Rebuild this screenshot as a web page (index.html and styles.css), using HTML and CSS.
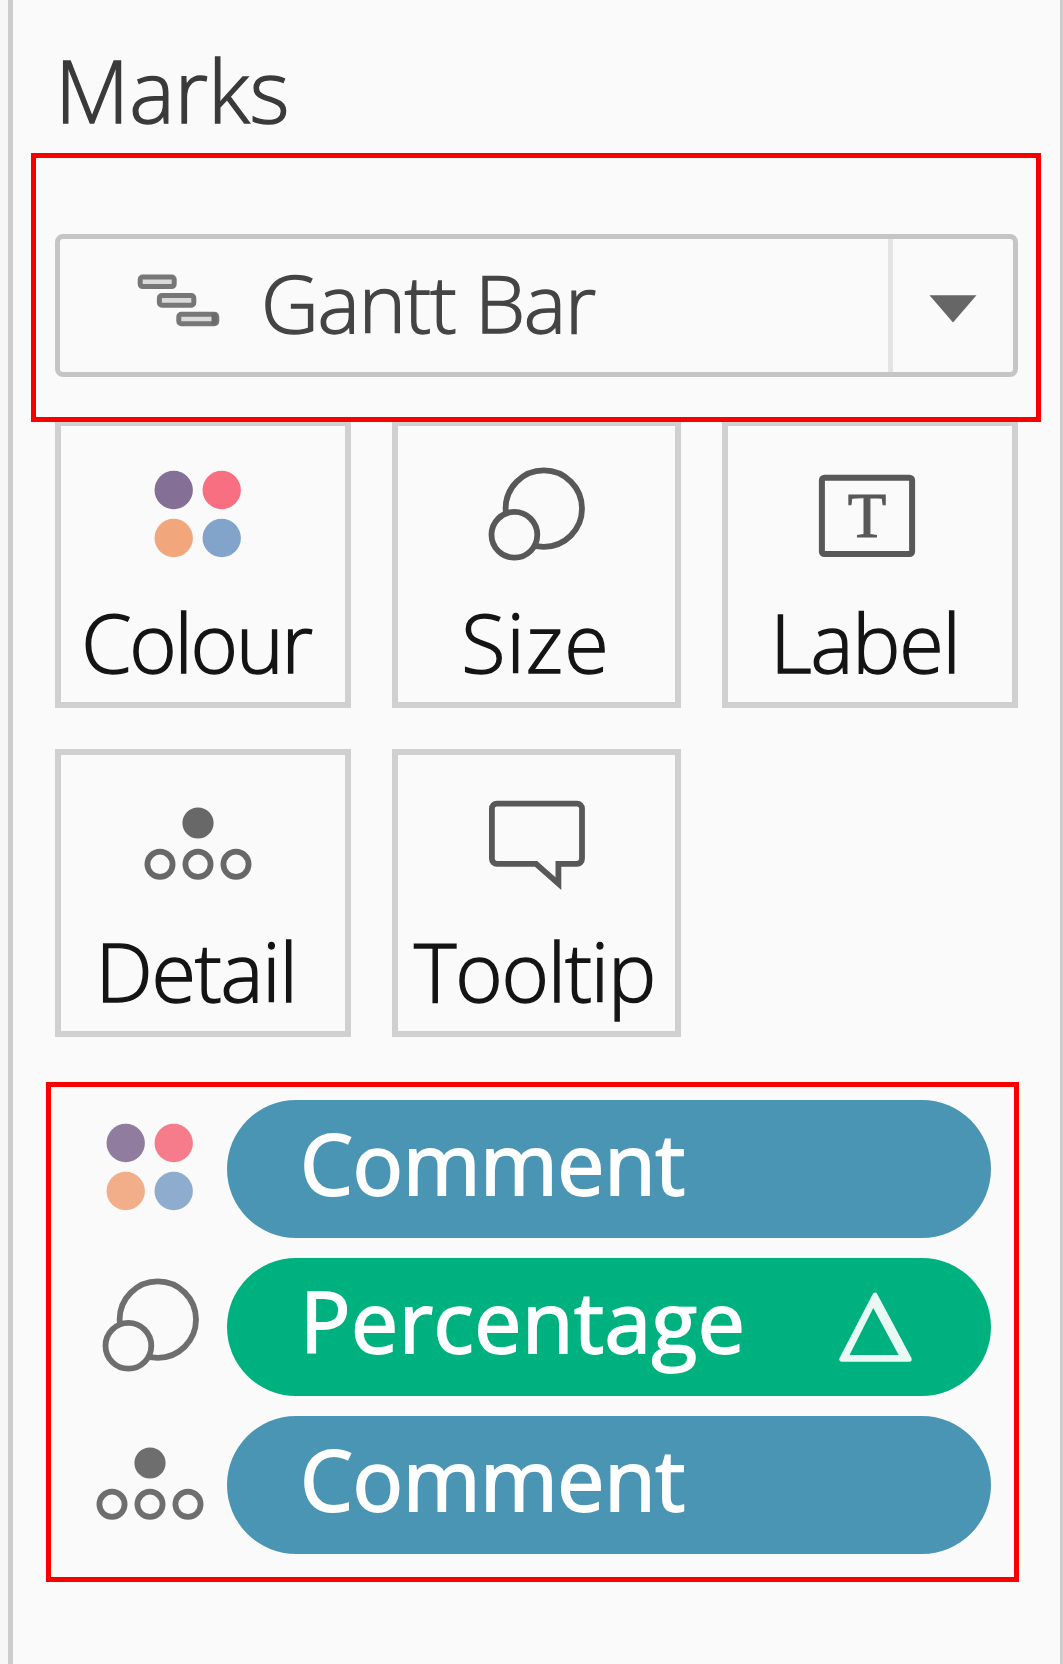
FILE: index.html
```html
<!DOCTYPE html>
<html lang="en-GB">
<head>
<meta charset="utf-8">
<title>Marks</title>
<link rel="stylesheet" href="styles.css">
</head>
<body>
<svg class="symbols" width="0" height="0" aria-hidden="true">
  <symbol id="icon-colour" viewBox="0 0 120 110">
    <circle cx="35.7" cy="30" r="19.2" fill="#846f96"/>
    <circle cx="83.7" cy="30" r="19.2" fill="#f76f80"/>
    <circle cx="35.7" cy="78" r="19.2" fill="#f2a67c"/>
    <circle cx="83.7" cy="78" r="19.2" fill="#82a4ca"/>
  </symbol>
  <symbol id="icon-size" viewBox="0 0 120 110">
    <g fill="#fafafa" stroke="currentColor" stroke-width="5.8">
      <circle cx="66.8" cy="48.6" r="38.2"/>
      <circle cx="37.4" cy="74.8" r="22.9"/>
    </g>
  </symbol>
  <symbol id="icon-detail" viewBox="0 0 120 110">
    <circle cx="60" cy="34" r="15.6" fill="currentColor"/>
    <g fill="none" stroke="currentColor" stroke-width="5.8">
      <circle cx="22" cy="75.3" r="12.6"/>
      <circle cx="60" cy="75.3" r="12.6"/>
      <circle cx="98" cy="75.3" r="12.6"/>
    </g>
  </symbol>
</svg>

<main class="panel">
  <h1 class="title">Marks</h1>

  <section class="highlight highlight-type">
    <div class="select">
      <svg class="gantt" viewBox="0 0 84 54" aria-hidden="true">
        <g fill="#dadada" stroke="#777" stroke-width="5">
          <rect x="3.2" y="3" width="34" height="9.6" rx="2.5"/>
          <rect x="22.4" y="21.6" width="34.4" height="9.6" rx="2.5"/>
          <rect x="41.8" y="40.2" width="38" height="9.6" rx="2.5"/>
        </g>
        <rect x="74.5" y="38.8" width="5.5" height="12" fill="#6a6a6a"/>
      </svg>
      <span class="select-label">Gantt Bar</span>
      <span class="select-arrow">
        <svg width="48" height="28" viewBox="0 0 48 28" aria-hidden="true"><path d="M.5 .3H47.5L24 27.6Z" fill="#666"/></svg>
      </span>
    </div>
  </section>

  <section class="tiles">
    <div class="tile shift-l">
      <svg class="icon"><use href="#icon-colour"/></svg>
      <span class="tile-label spacing-tight">Colour</span>
    </div>
    <div class="tile">
      <svg class="icon"><use href="#icon-size"/></svg>
      <span class="tile-label spacing-wide">Size</span>
    </div>
    <div class="tile shift-s">
      <svg class="icon" viewBox="0 0 120 110">
        <rect x="14.9" y="17.7" width="90.2" height="76.4" rx="2.5" fill="none" stroke="currentColor" stroke-width="6"/>
        <text class="icon-t" x="60" y="76.7" text-anchor="middle">T</text>
      </svg>
      <span class="tile-label">Label</span>
    </div>
    <div class="tile shift-l">
      <svg class="icon icon-soft"><use href="#icon-detail"/></svg>
      <span class="tile-label">Detail</span>
    </div>
    <div class="tile">
      <svg class="icon" viewBox="0 0 120 110">
        <path d="M19.9 14.6H100a5 5 0 0 1 5 5V69.8a5 5 0 0 1-5 5H81.4V94.6L59 74.8H19.9a5 5 0 0 1-5-5V19.6a5 5 0 0 1 5-5Z" fill="none" stroke="currentColor" stroke-width="5.8"/>
      </svg>
      <span class="tile-label">Tooltip</span>
    </div>
  </section>

  <section class="highlight highlight-fields">
    <div class="field">
      <svg class="icon field-colour"><use href="#icon-colour"/></svg>
      <div class="pill pill-blue"><span>Comment</span></div>
    </div>
    <div class="field">
      <svg class="icon field-size"><use href="#icon-size"/></svg>
      <div class="pill pill-green">
        <span>Percentage</span>
        <svg class="delta" width="74" height="72" viewBox="0 0 74 72" aria-hidden="true">
          <path d="M36 3.2L2.8 67.2H70.2ZM34.2 10.5L63.9 65.5H6.4Z" fill="#e9f8f3" stroke="#e9f8f3" stroke-width="5" stroke-linejoin="round" fill-rule="evenodd"/>
        </svg>
      </div>
    </div>
    <div class="field">
      <svg class="icon"><use href="#icon-detail"/></svg>
      <div class="pill pill-blue"><span>Comment</span></div>
    </div>
  </section>
</main>
</body>
</html>
```
FILE: styles.css
```css
* { box-sizing: border-box; }

body {
  margin: 0;
  background: #f7f7f7;
  font-family: "Open Sans", "Noto Sans", sans-serif;
  font-weight: 300;
}

.symbols { display: block; }

.panel {
  width: 1055px;
  height: 1664px;
  margin-left: 8px;
  padding-left: 18px;
  background: #fafafa;
  border-left: 5px solid #cdcdcd;
  border-right: 3px solid #cdcdcd;
}

.title {
  height: 153px;
  margin: 0;
  padding: 40px 0 0 24px;
  font-size: 86px;
  font-weight: 300;
  line-height: 100px;
  letter-spacing: -.1px;
  color: #3a3a3a;
  -webkit-text-stroke: 1.4px currentColor;
}

.highlight {
  position: relative;
  border: 5px solid #f90000;
}

.highlight-type {
  width: 1010px;
  height: 269px;
  padding: 76px 18px 0 19px;
}

.select {
  display: flex;
  align-items: center;
  width: 963px;
  height: 143px;
  padding-left: 77px;
  border: 5px solid #c5c5c5;
  border-radius: 8px;
}

.gantt {
  width: 84px;
  height: 54px;
  margin-right: 40px;
  margin-top: -9px;
}

.select-label {
  flex: 1;
  padding-bottom: 8px;
  font-size: 80px;
  line-height: 100px;
  letter-spacing: -1.3px;
  white-space: nowrap;
  color: #444;
  -webkit-text-stroke: 1.4px currentColor;
}

.select-arrow {
  display: flex;
  align-items: center;
  justify-content: center;
  width: 125px;
  height: 100%;
  padding: 7px 1px 0 0;
  border-left: 5px solid #e4e4e4;
}

.tiles {
  display: grid;
  grid-template-columns: 296px 289px 296px;
  grid-auto-rows: 288px;
  gap: 41px;
  margin: -2px 0 0 24px;
}

.tile {
  display: flex;
  flex-direction: column;
  align-items: center;
  padding-top: 34px;
  border: 6px solid #d0d0d0;
}

.shift-l { padding-right: 10px; }
.shift-s { padding-right: 6px; }

.icon {
  flex: none;
  width: 120px;
  height: 110px;
  color: #585858;
}

.icon-soft { color: #686868; }

.icon-t {
  font: 400 63px "Liberation Serif", serif;
  fill: currentColor;
  stroke: currentColor;
  stroke-width: 1;
}

.tile-label {
  margin-top: 32px;
  padding-right: 4px;
  font-size: 81px;
  line-height: 80px;
  letter-spacing: -1.2px;
  white-space: nowrap;
  color: #141414;
  -webkit-text-stroke: 1.4px currentColor;
}

.spacing-tight { letter-spacing: -2.2px; }

.spacing-wide {
  padding-right: 2px;
  letter-spacing: 1px;
}

.highlight-fields {
  display: flex;
  flex-direction: column;
  gap: 20px;
  width: 973px;
  height: 500px;
  margin: 45px 0 0 15px;
  padding: 13px 22px 0 39px;
}

.field {
  display: flex;
  gap: 17px;
  height: 138px;
}

.field .icon {
  margin-top: 13px;
  color: #6e6e6e;
}

.field .field-colour { opacity: .9; }

.field .field-size {
  margin-left: 1px;
  margin-right: -1px;
}

.pill {
  display: flex;
  align-items: center;
  justify-content: space-between;
  width: 764px;
  padding: 0 78px 13px 73px;
  border-radius: 69px;
  font-size: 84px;
  font-weight: 500;
  line-height: 100px;
  letter-spacing: -.4px;
  color: #fff;
  -webkit-text-stroke: 1.8px currentColor;
}

.pill-blue { background: #4a95b3; }

.pill-green {
  background: #00b180;
  letter-spacing: .5px;
}

.delta { margin-top: 14px; }
```
